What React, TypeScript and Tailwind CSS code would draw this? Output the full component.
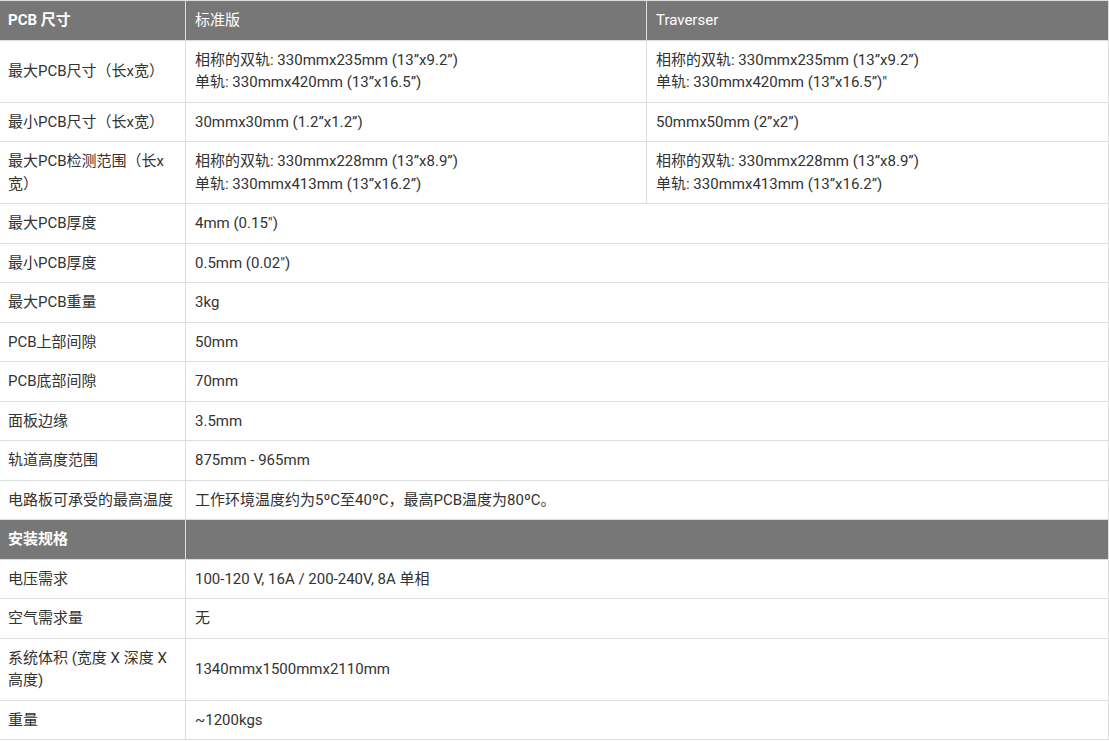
type Row = {
  label: string;
  std: string[];
  trav?: string[];
};

const pcbRows: Row[] = [
  {
    label: "最大PCB尺寸（长x宽）",
    std: ["相称的双轨: 330mmx235mm (13”x9.2”)", "单轨: 330mmx420mm (13”x16.5”)"],
    trav: ["相称的双轨: 330mmx235mm (13”x9.2”)", "单轨: 330mmx420mm (13”x16.5”)\""],
  },
  {
    label: "最小PCB尺寸（长x宽）",
    std: ["30mmx30mm (1.2”x1.2”)"],
    trav: ["50mmx50mm (2”x2”)"],
  },
  {
    label: "最大PCB检测范围（长x宽）",
    std: ["相称的双轨: 330mmx228mm (13”x8.9”)", "单轨: 330mmx413mm (13”x16.2”)"],
    trav: ["相称的双轨: 330mmx228mm (13”x8.9”)", "单轨: 330mmx413mm (13”x16.2”)"],
  },
  { label: "最大PCB厚度", std: ["4mm (0.15\")"] },
  { label: "最小PCB厚度", std: ["0.5mm (0.02\")"] },
  { label: "最大PCB重量", std: ["3kg"] },
  { label: "PCB上部间隙", std: ["50mm"] },
  { label: "PCB底部间隙", std: ["70mm"] },
  { label: "面板边缘", std: ["3.5mm"] },
  { label: "轨道高度范围", std: ["875mm - 965mm"] },
  { label: "电路板可承受的最高温度", std: ["工作环境温度约为5ºC至40ºC，最高PCB温度为80ºC。"] },
];

const installRows: Row[] = [
  { label: "电压需求", std: ["100-120 V, 16A / 200-240V, 8A 单相"] },
  { label: "空气需求量", std: ["无"] },
  { label: "系统体积 (宽度 X 深度 X 高度)", std: ["1340mmx1500mmx2110mm"] },
  { label: "重量", std: ["~1200kgs"] },
];

const cell = "border border-[#dddddd] px-[9px] py-[8px] align-middle text-left";
const first = "border border-[#dddddd] pl-[8px] pr-[9px] py-[8px] align-middle text-left";
const head = "border border-[#dddddd] bg-[#777777] px-[9px] py-[8px] text-left font-normal text-white";
const headFirst = "border border-[#dddddd] bg-[#777777] pl-[8px] pr-[9px] py-[8px] text-left font-bold text-white";

function Lines({ lines }: { lines: string[] }) {
  return (
    <>
      {lines.map((l, i) => (
        <div key={i}>{l}</div>
      ))}
    </>
  );
}

function BodyRow({ row }: { row: Row }) {
  return (
    <tr>
      <td className={first}>{row.label}</td>
      {row.trav ? (
        <>
          <td className={cell}>
            <Lines lines={row.std} />
          </td>
          <td className={cell}>
            <Lines lines={row.trav} />
          </td>
        </>
      ) : (
        <td className={cell} colSpan={2}>
          <Lines lines={row.std} />
        </td>
      )}
    </tr>
  );
}

export default function App() {
  return (
    <div className="min-h-screen bg-white overflow-hidden">
      <table
        className="ml-[-1px] w-[1109px] table-fixed border-collapse text-[15px] leading-[22.5px] text-[#333333]"
        style={{ fontFamily: 'Roboto, "Noto Sans CJK SC", sans-serif' }}
      >
        <colgroup>
          <col className="w-[186px]" />
          <col className="w-[461px]" />
          <col className="w-[462px]" />
        </colgroup>
        <tbody>
          <tr>
            <th className={headFirst}>PCB 尺寸</th>
            <th className={head}>标准版</th>
            <th className={head}>Traverser</th>
          </tr>
          {pcbRows.map((r) => (
            <BodyRow key={r.label} row={r} />
          ))}
          <tr>
            <th className={headFirst}>安装规格</th>
            <th className={head} colSpan={2}></th>
          </tr>
          {installRows.map((r) => (
            <BodyRow key={r.label} row={r} />
          ))}
        </tbody>
      </table>
    </div>
  );
}
